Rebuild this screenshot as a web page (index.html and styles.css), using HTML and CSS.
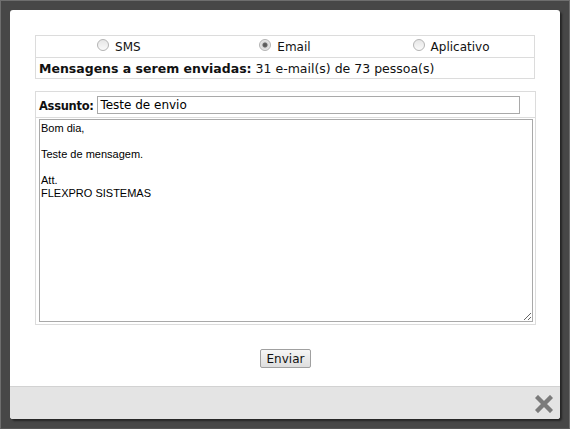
FILE: index.html
```html
<!DOCTYPE html>
<html lang="pt-BR">
<head>
    <meta charset="UTF-8">
    <title>Enviar mensagem</title>
    <link rel="stylesheet" href="styles.css">
</head>
<body>
<div class="frame">
    <div class="dialog">
        <div class="content">
            <table class="box tipos">
                <tr class="radios">
                    <td><label><input type="radio" name="tipo"> SMS</label></td>
                    <td><label><input type="radio" name="tipo" checked> Email</label></td>
                    <td><label><input type="radio" name="tipo"> Aplicativo</label></td>
                </tr>
                <tr>
                    <td colspan="3" class="resumo"><b>Mensagens a serem enviadas:</b> 31 e-mail(s) de 73 pessoa(s)</td>
                </tr>
            </table>

            <table class="box msg">
                <tr>
                    <td class="assunto"><b>Assunto:</b> <input type="text" value="Teste de envio"></td>
                </tr>
                <tr>
                    <td class="corpo"><textarea>Bom dia,

Teste de mensagem.

Att.
FLEXPRO SISTEMAS</textarea></td>
                </tr>
            </table>

            <div class="acoes">
                <button type="button">Enviar</button>
            </div>
        </div>
        <div class="rodape">
            <svg class="fechar" width="18" height="18" viewBox="0 0 18 18">
                <path d="M3 3 L15 15 M15 3 L3 15" stroke="#7a7a7a" stroke-width="4.4" stroke-linecap="square"/>
            </svg>
        </div>
    </div>
</div>
</body>
</html>
```

FILE: styles.css
```css
body{
    margin: 0;
    font-family: 'DejaVu Sans', Verdana, sans-serif;
    font-size: 12px;
    color: #111;
}
.frame{
    width: 570px;
    height: 429px;
    box-sizing: border-box;
    padding: 9px;
    background-color: #474747;
    border: 1px solid #6e6e6e;
    border-bottom-color: #555;
}
.dialog{
    height: 409px;
    width: 550px;
    background-color: #fff;
    border-radius: 3px;
    box-shadow: 2px 2px 2px #262626;
    display: flex;
    flex-direction: column;
    overflow: hidden;
}
.content{
    flex: 1;
    padding: 25px 24px 0 25px;
}
.box{
    width: 500px;
    border: 1px solid #dcdcdc;
    border-collapse: collapse;
}
.box td{
    border: 1px solid #dcdcdc;
}
.tipos td{
    height: 20px;
    padding: 0 3px;
}
.radios td{
    text-align: center;
    width: 33.3%;
    height: 19px;
    padding-top: 2px;
    border-left: none;
    border-right: none;
}
.radios label{
    display: inline-flex;
    align-items: center;
    gap: 6px;
}
input[type="radio"]{
    appearance: none;
    width: 12px;
    height: 12px;
    margin: 0;
    border-radius: 50%;
    border: 1px solid #b4b4b4;
    background: linear-gradient(#e6e6e6, #fafafa);
    position: relative;
    top: -2px;
}
input[type="radio"]:checked{
    background: radial-gradient(circle, #555 0, #666 2px, #d8d8d8 3px, #f4f4f4 6px);
}
.resumo{
    text-align: left;
    font-size: 12.5px;
}
.msg{
    margin-top: 12px;
}
.assunto{
    height: 25px;
    padding: 0 3px;
}
.assunto b{
    font-size: 11.5px;
    letter-spacing: -0.3px;
}
input[type="text"]{
    width: 423px;
    height: 18px;
    box-sizing: border-box;
    border: 1px solid #a9a9a9;
    padding: 0 2px;
    font-family: 'DejaVu Sans', Verdana, sans-serif;
    font-size: 12px;
    margin: 0;
    vertical-align: 1px;
}
.corpo{
    padding: 1px 2px 2px 3px;
    line-height: 0;
}
textarea{
    width: 494px;
    height: 203px;
    box-sizing: border-box;
    border: 1px solid #a9a9a9;
    margin: 0;
    padding: 2px 1px;
    font-family: 'Liberation Sans', Arial, sans-serif;
    font-size: 11px;
    line-height: 13px;
    color: #000;
    resize: both;
}
.acoes{
    text-align: center;
    margin-top: 24px;
}
button{
    font-family: 'DejaVu Sans', Verdana, sans-serif;
    font-size: 12px;
    height: 19px;
    padding: 0 6px;
    border: 1px solid #a0a0a0;
    border-radius: 2px;
    background: linear-gradient(#f6f6f6, #dedede);
    color: #111;
}
.rodape{
    height: 32px;
    background-color: #e4e4e4;
    border-top: 1px solid #d2d2d2;
    display: flex;
    justify-content: flex-end;
    align-items: center;
    padding-right: 7px;
}
.fechar{
    display: block;
    margin-top: 2px;
}
```
